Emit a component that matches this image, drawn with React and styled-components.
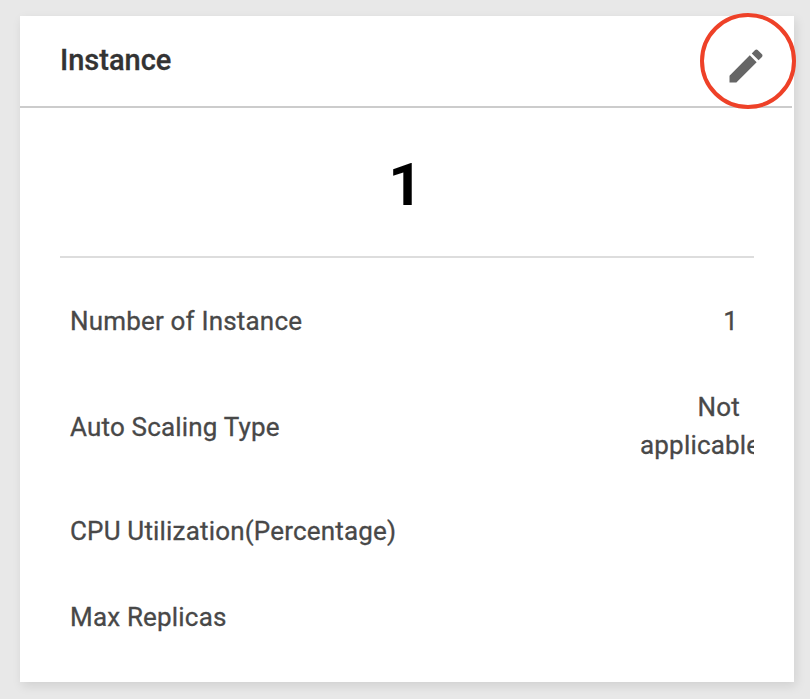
import React from 'react';
import styled, { createGlobalStyle } from 'styled-components';

const GlobalStyle = createGlobalStyle`
  * { box-sizing: border-box; }
  body {
    margin: 0;
    background: #e8e8e8;
    font-family: Roboto, "Liberation Sans", sans-serif;
    overflow: hidden;
  }
`;

const Page = styled.main`
  height: 699px;
  padding: 16px 16px 17px 20px;
`;

const Card = styled.section`
  height: 666px;
  background: #fff;
  box-shadow: 2px 4px 10px rgba(0, 0, 0, 0.1);
`;

const Header = styled.header`
  position: relative;
  display: flex;
  align-items: center;
  height: 92px;
  margin-right: 2px;
  padding: 0 0 2px 40px;
  border-bottom: 2px solid #ccc;
`;

const Title = styled.h2`
  margin: 0;
  color: #333;
  font-size: 29px;
  font-weight: 500;
  line-height: 40px;
  -webkit-text-stroke: 0.3px currentColor;
`;

const EditButton = styled.button`
  position: absolute;
  top: -3px;
  right: -4px;
  display: flex;
  width: 96px;
  height: 96px;
  padding: 0;
  border: 4px solid #ee4128;
  border-radius: 50%;
  background: transparent;
  color: #666;
`;

const PencilIcon = styled.svg`
  width: 44px;
  height: 44px;
  margin: 27px 0 0 20px;
  fill: currentColor;
`;

const Body = styled.div`
  padding: 0 40px;
`;

const Count = styled.div`
  height: 150px;
  border-bottom: 2px solid #ddd;
  color: #000;
  font-size: 60px;
  font-weight: 700;
  line-height: 153px;
  text-align: center;
  padding-right: 3px;
`;

const Details = styled.dl`
  margin: 20px 0 0;
  overflow: hidden;
`;

const Row = styled.div`
  display: flex;
  align-items: center;
  justify-content: space-between;
  height: ${({ $height }) => $height}px;
  padding-left: 10px;
  color: #484848;
  font-size: 26px;
  letter-spacing: 0.18px;
  line-height: 38px;
  -webkit-text-stroke: 0.3px currentColor;
`;

const Label = styled.dt`
  padding-top: ${({ $drop }) => $drop || 0}px;
  white-space: nowrap;
`;

const Value = styled.dd`
  flex: none;
  width: 100px;
  margin: 0 14px 0 0;
  padding-right: ${({ $inset }) => $inset || 0}px;
  text-align: right;
`;

const rows = [
  { label: 'Number of Instance', value: '1', height: 86, inset: 2 },
  { label: 'Auto Scaling Type', value: 'Not applicable', height: 124, drop: 2 },
  { label: 'CPU Utilization(Percentage)', value: '', height: 86 },
  { label: 'Max Replicas', value: '', height: 86 },
];

export default function App() {
  return (
    <>
      <GlobalStyle />
      <Page>
        <Card>
          <Header>
            <Title>Instance</Title>
            <EditButton aria-label="Edit instance">
              <PencilIcon viewBox="0 0 24 24">
                <path d="M3 17.25V21h3.75L17.81 9.94l-3.75-3.75L3 17.25zM20.71 7.04c.39-.39.39-1.02 0-1.41l-2.34-2.34c-.39-.39-1.02-.39-1.41 0l-1.83 1.83 3.75 3.75 1.83-1.83z" />
              </PencilIcon>
            </EditButton>
          </Header>
          <Body>
            <Count>1</Count>
            <Details>
              {rows.map(({ label, value, height, drop, inset }) => (
                <Row key={label} $height={height}>
                  <Label $drop={drop}>{label}</Label>
                  <Value $inset={inset}>{value}</Value>
                </Row>
              ))}
            </Details>
          </Body>
        </Card>
      </Page>
    </>
  );
}
